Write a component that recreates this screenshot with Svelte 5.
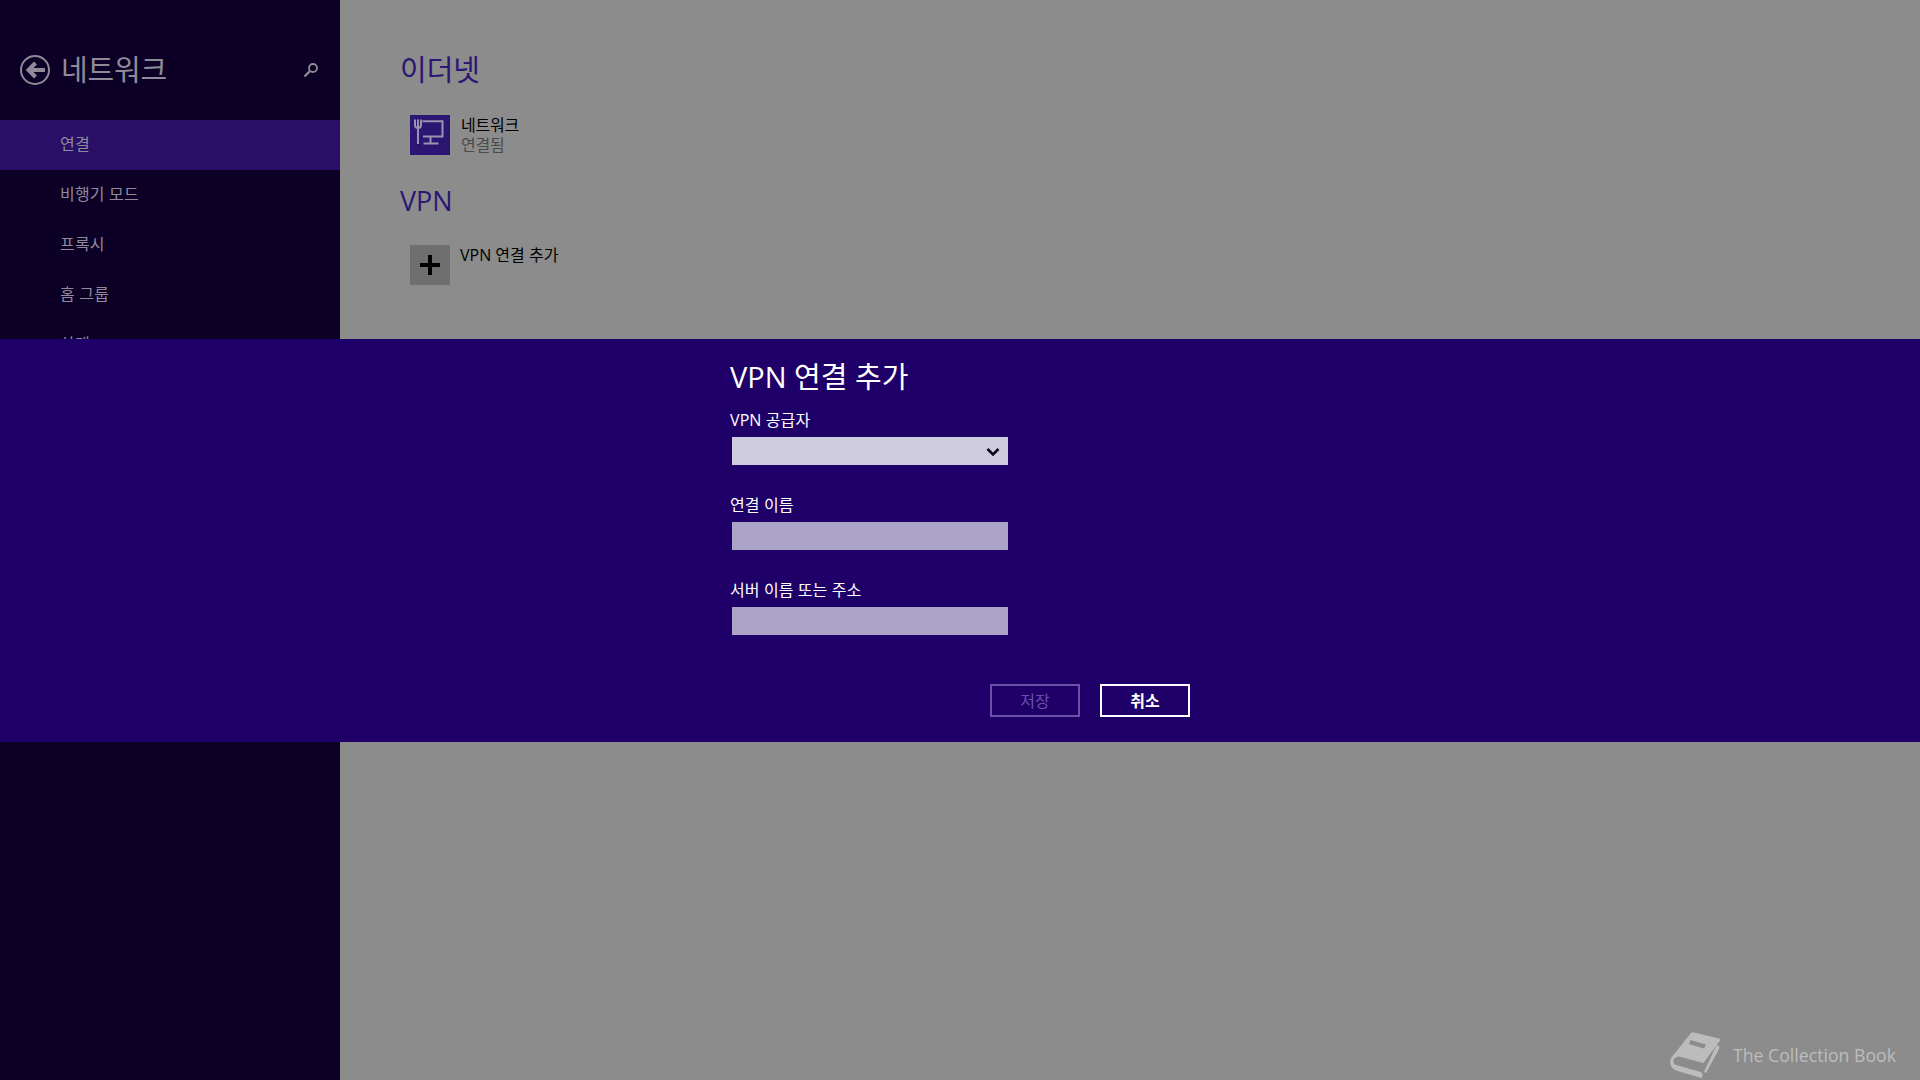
<script>
  const navItems = ['연결', '비행기 모드', '프록시', '홈 그룹', '상태'];
  const fields = [
    { label: 'VPN 공급자', select: true },
    { label: '연결 이름' },
    { label: '서버 이름 또는 주소' }
  ];
</script>

<div class="page">
  <aside class="sidebar">
    <header class="side-head">
      <svg class="back" width="32" height="32" viewBox="0 0 32 32" fill="none" stroke="#8f8b99">
        <circle cx="16" cy="16" r="14" stroke-width="2" />
        <path d="M26 16H10M16.500 9 9.500 16l7 7" stroke-width="4" />
      </svg>
      <h1>네트워크</h1>
      <svg class="search" width="16" height="16" viewBox="0 0 16 16" fill="none" stroke="#8f8b99">
        <circle cx="10" cy="6" r="4" stroke-width="1.800" />
        <path d="M7 9 1.500 14.500" stroke-width="2.400" />
      </svg>
    </header>
    <nav>
      {#each navItems as item, i}
        <div class="nav-item" class:active={i === 0}>{item}</div>
      {/each}
    </nav>
  </aside>

  <main class="content">
    <h2>이더넷</h2>
    <div class="tile">
      <div class="tile-icon net">
        <svg width="40" height="40" viewBox="0 0 40 40" fill="none" stroke="#9a94b0" stroke-width="2">
          <path d="M5 4.500V10a3 3 0 0 0 6 0V4.500M8 4.500V29" />
          <path d="M12.500 6.200H32.500V21.500H13M20.500 21.500v7M13.500 28.500h15" />
        </svg>
      </div>
      <div class="tile-text">
        <div class="tile-name">네트워크</div>
        <div class="tile-sub">연결됨</div>
      </div>
    </div>
    <h2 class="vpn">VPN</h2>
    <div class="tile">
      <div class="tile-icon add">
        <svg width="40" height="40" viewBox="0 0 40 40" fill="none" stroke="#000" stroke-width="4">
          <path d="M20 10v20M10 20h20" />
        </svg>
      </div>
      <div class="tile-text add-text">VPN 연결 추가</div>
    </div>
  </main>

  <section class="dialog">
    <div class="dialog-body">
      <h3>VPN 연결 추가</h3>
      {#each fields as field}
        <div class="field">
          <div class="label">{field.label}</div>
          <div class="box" class:select={field.select}>
            {#if field.select}
              <svg width="14" height="10" viewBox="0 0 14 10" fill="none" stroke="#0a0a14" stroke-width="2.600">
                <path d="M1.500 2 7 7.500 12.500 2" />
              </svg>
            {/if}
          </div>
        </div>
      {/each}
      <div class="actions">
        <button class="btn disabled">저장</button>
        <button class="btn">취소</button>
      </div>
    </div>
  </section>

  <div class="watermark">
    <svg width="51" height="46" viewBox="0 0 51 46" fill="#bcbcbc">
      <path fill-rule="evenodd" d="M21 1Q22 0 24 .5L49 6.500Q50.500 7 50 8.500L33.500 31 9 24.500Q6 24 4 27 2 31 6 33L31 40 33 43 31.500 46 6 38.500Q-2 35 1 26ZM20.500 8 19 12 34 16.500 36 12.500Z" />
      <path d="M46.500 13 49 14Q50 15 49 17L36 41 34 40Z" />
    </svg>
    <span>The Collection Book</span>
  </div>
</div>

<style>
  :global(body) {
    margin: 0;
    background: #8c8c8c;
  }

  .page {
    position: relative;
    display: flex;
    width: 1920px;
    height: 1080px;
    overflow: hidden;
    font-family: "Open Sans", "Noto Sans CJK KR", sans-serif;
  }

  .sidebar {
    width: 340px;
    flex: none;
    background: #0d0027;
    color: #8f8b99;
  }

  .side-head {
    display: flex;
    align-items: center;
    height: 120px;
    padding: 20px 21px 0 19px;
    box-sizing: border-box;
  }

  .back {
    flex: none;
  }

  .side-head h1 {
    flex: 1;
    margin: 0 0 0 10px;
    font-size: 29px;
    font-weight: 400;
    line-height: 40px;
    letter-spacing: -0.2px;
  }

  .nav-item {
    height: 50px;
    padding-left: 60px;
    font-size: 16px;
    letter-spacing: 0.2px;
    line-height: 48px;
  }

  .nav-item.active {
    background: #290f67;
  }

  .content {
    flex: 1;
    padding: 50px 0 0 60px;
    color: #000;
  }

  h2 {
    margin: 0;
    font-size: 29px;
    font-weight: 400;
    line-height: 40px;
    color: #2b1673;
  }

  h2.vpn {
    margin: 26px 0 0 0;
    font-size: 27px;
  }

  .tile {
    display: flex;
    margin: 25px 0 0 10px;
  }

  .vpn + .tile {
    margin-top: 24px;
  }

  .tile-icon {
    width: 40px;
    height: 40px;
    flex: none;
  }

  .tile-icon svg {
    display: block;
  }

  .net {
    background: #2b1673;
  }

  .add {
    background: #6f6f6f;
  }

  .tile-text {
    margin-left: 11px;
    font-size: 16px;
    line-height: 20px;
  }

  .tile-name {
    letter-spacing: -0.2px;
  }

  .tile-sub {
    color: #4a4a4a;
    letter-spacing: -0.2px;
  }

  .add-text {
    margin: 0 0 0 10px;
  }

  /* modal band over the page */
  .dialog {
    position: absolute;
    left: 0;
    right: 0;
    top: 339px;
    height: 403px;
    background: #1f0068;
    color: #fff;
  }

  .dialog-body {
    width: 460px;
    margin-left: 730px;
  }

  h3 {
    margin: 0 0 10px;
    padding-top: 18px;
    font-size: 29px;
    font-weight: 400;
    line-height: 40px;
  }

  .field {
    margin-bottom: 27px;
  }

  .label {
    height: 26px;
    margin-bottom: 4px;
    font-size: 16px;
    letter-spacing: 0.1px;
    line-height: 26px;
  }

  .box {
    width: 276px;
    height: 28px;
    margin-left: 2px;
    background: #aca4c8;
  }

  .box.select {
    display: flex;
    align-items: center;
    justify-content: flex-end;
    padding: 2px 8px 0 0;
    box-sizing: border-box;
    background: #d0cce0;
  }

  .actions {
    display: flex;
    gap: 20px;
    margin: 49px 0 0 260px;
  }

  .btn {
    width: 90px;
    height: 33px;
    padding: 0;
    border: 2px solid #fff;
    box-sizing: border-box;
    background: none;
    color: #fff;
    font-family: inherit;
    font-size: 16px;
    font-weight: 600;
    line-height: 26px;
  }

  .btn.disabled {
    border-color: #6a52a8;
    color: #6a52a8;
    font-weight: 400;
  }

  .watermark {
    position: absolute;
    right: 24px;
    bottom: 2px;
    display: flex;
    align-items: center;
    gap: 12px;
    color: #bcbcbc;
    font-size: 17.700px;
  }

  .watermark svg {
    display: block;
  }
</style>
